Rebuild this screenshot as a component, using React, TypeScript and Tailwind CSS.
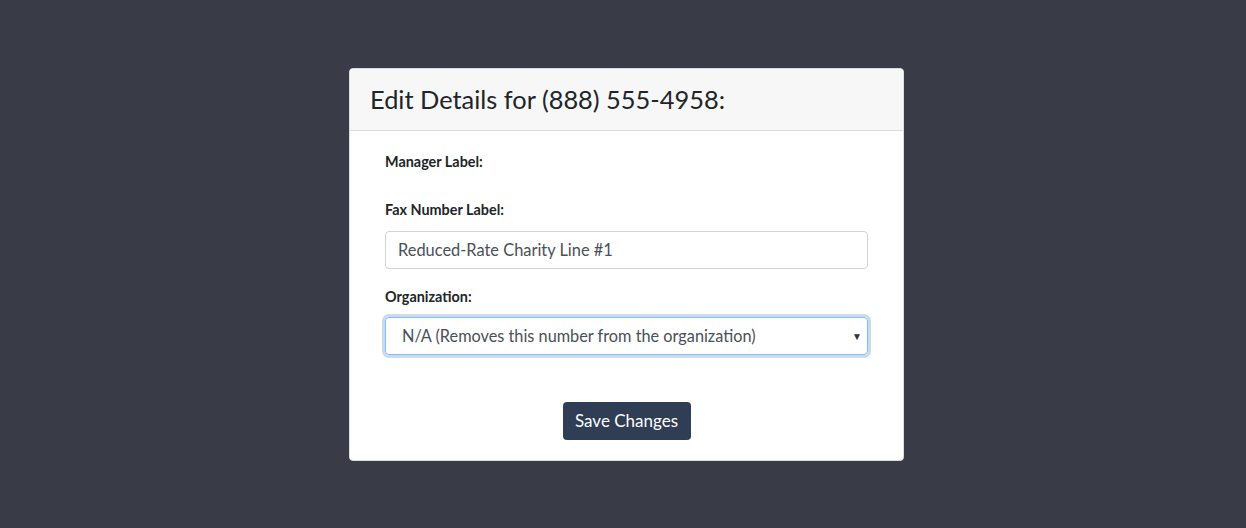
import React from "react";

export default function App() {
  return (
    <div className="w-[1246px] h-[528px] bg-[#393c47] flex justify-center pl-[7px] pt-[68px]" style={{ fontFamily: "Lato, 'Noto Sans', sans-serif" }}>
      <div className="w-[555px] h-[393px] bg-white rounded-[4px] border border-[#dcdcdc] flex flex-col overflow-hidden">
        <div className="h-[62px] bg-[#f7f7f7] border-b border-[#dcdcdc] flex items-center px-[20px]">
          <h3 className="text-[25.4px] text-[#212529] leading-none">Edit Details for (888) 555-4958:</h3>
        </div>
        <div className="flex flex-col px-[35px] pt-[21px]">
          <label className="text-[14.4px] font-bold text-[#212529] leading-[20px]">Manager Label:</label>
          <label className="mt-[28px] text-[14.4px] font-bold text-[#212529] leading-[20px]">Fax Number Label:</label>
          <div className="mt-[11px] h-[38px] border border-[#ced4da] rounded-[4px] flex items-center px-[12px] text-[16.4px] text-[#495057]">
            Reduced-Rate Charity Line #1
          </div>
          <label className="mt-[18px] text-[14.4px] font-bold text-[#212529] leading-[20px]">Organization:</label>
          <div className="mt-[10px] h-[38px] border border-[#80bdff] rounded-[4px] shadow-[0_0_0_3px_rgba(52,109,173,0.25)] flex items-center justify-between pl-[16px] pr-[5px] text-[16.3px] text-[#495057]">
            <span>N/A (Removes this number from the organization)</span>
            <span className="text-[10px] text-[#333]">▼</span>
          </div>
          <div className="flex justify-center mt-[47px]">
            <button className="w-[128px] h-[38px] bg-[#2f3d55] text-white text-[17px] rounded-[4px]">Save Changes</button>
          </div>
        </div>
      </div>
    </div>
  );
}
